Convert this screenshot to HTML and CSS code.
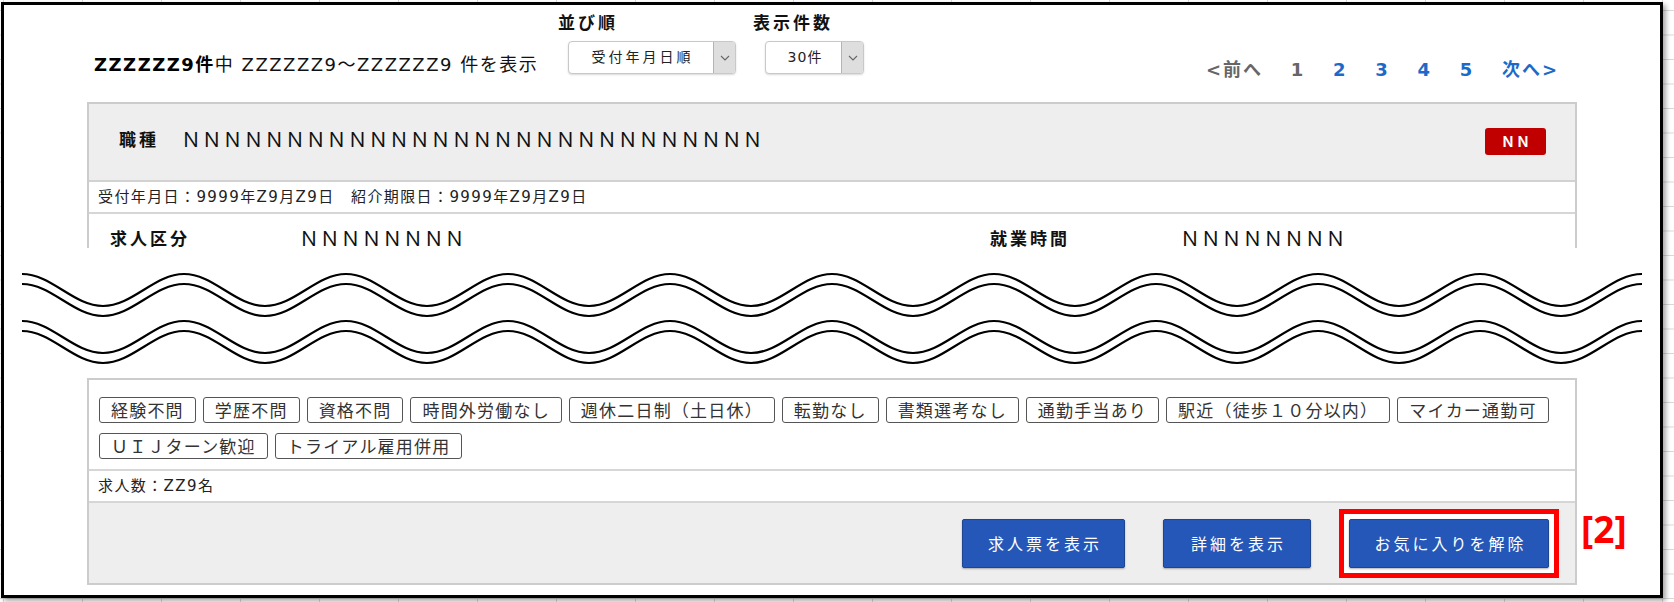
FILE: index.html
```html
<!DOCTYPE html>
<html lang="ja">
<head>
<meta charset="utf-8">
<title>求人一覧</title>
<link rel="stylesheet" href="styles.css">
</head>
<body>
<div class="frame">
  <section class="top">
    <div class="toolbar">
      <p class="count"><b>ZZZZZZ9件</b>中 ZZZZZZ9〜ZZZZZZ9 件を表示</p>
      <div class="field">
        <span class="field-label">並び順</span>
        <div class="select select-sort">
          <span class="select-value">受付年月日順</span>
          <span class="select-btn"><svg width="10" height="6" viewBox="0 0 10 6"><polyline points="1,1 5,5 9,1" fill="none" stroke="#666" stroke-width="1.1"/></svg></span>
        </div>
      </div>
      <div class="field field-size">
        <span class="field-label">表示件数</span>
        <div class="select select-size">
          <span class="select-value">30件</span>
          <span class="select-btn"><svg width="10" height="6" viewBox="0 0 10 6"><polyline points="1,1 5,5 9,1" fill="none" stroke="#666" stroke-width="1.1"/></svg></span>
        </div>
      </div>
      <nav class="pager">
        <span class="pg-off">&lt;前へ</span>
        <span class="pg-off">1</span>
        <a class="pg-link">2</a>
        <a class="pg-link">3</a>
        <a class="pg-link">4</a>
        <a class="pg-link">5</a>
        <a class="pg-link">次へ&gt;</a>
      </nav>
    </div>
    <div class="card card-top">
      <div class="card-head">
        <span class="head-label">職種</span>
        <span class="nn">ＮＮＮＮＮＮＮＮＮＮＮＮＮＮＮＮＮＮＮＮＮＮＮＮＮＮＮＮ</span>
        <span class="badge">ＮＮ</span>
      </div>
      <div class="dates">受付年月日：9999年Z9月Z9日　紹介期限日：9999年Z9月Z9日</div>
      <div class="detail">
        <span class="detail-label">求人区分</span>
        <span class="nn">ＮＮＮＮＮＮＮＮ</span>
        <span class="detail-label">就業時間</span>
        <span class="nn">ＮＮＮＮＮＮＮＮ</span>
      </div>
    </div>
  </section>

  <div class="break">
    <svg class="wave" width="1656" height="130" viewBox="0 0 1656 130">
      <g fill="none" stroke="#000" stroke-width="2.2">
        <path d="M18 26c29.5 0 51.5 32 81 32c29.5 0 51.5 -32 81 -32c29.5 0 51.5 32 81 32c29.5 0 51.5 -32 81 -32c29.5 0 51.5 32 81 32c29.5 0 51.5 -32 81 -32c29.5 0 51.5 32 81 32c29.5 0 51.5 -32 81 -32c29.5 0 51.5 32 81 32c29.5 0 51.5 -32 81 -32c29.5 0 51.5 32 81 32c29.5 0 51.5 -32 81 -32c29.5 0 51.5 32 81 32c29.5 0 51.5 -32 81 -32c29.5 0 51.5 32 81 32c29.5 0 51.5 -32 81 -32c29.5 0 51.5 32 81 32c29.5 0 51.5 -32 81 -32c29.5 0 51.5 32 81 32c29.5 0 51.5 -32 81 -32"/>
        <path d="M18 36c29.5 0 51.5 32 81 32c29.5 0 51.5 -32 81 -32c29.5 0 51.5 32 81 32c29.5 0 51.5 -32 81 -32c29.5 0 51.5 32 81 32c29.5 0 51.5 -32 81 -32c29.5 0 51.5 32 81 32c29.5 0 51.5 -32 81 -32c29.5 0 51.5 32 81 32c29.5 0 51.5 -32 81 -32c29.5 0 51.5 32 81 32c29.5 0 51.5 -32 81 -32c29.5 0 51.5 32 81 32c29.5 0 51.5 -32 81 -32c29.5 0 51.5 32 81 32c29.5 0 51.5 -32 81 -32c29.5 0 51.5 32 81 32c29.5 0 51.5 -32 81 -32c29.5 0 51.5 32 81 32c29.5 0 51.5 -32 81 -32"/>
        <path d="M18 73c29.5 0 51.5 32 81 32c29.5 0 51.5 -32 81 -32c29.5 0 51.5 32 81 32c29.5 0 51.5 -32 81 -32c29.5 0 51.5 32 81 32c29.5 0 51.5 -32 81 -32c29.5 0 51.5 32 81 32c29.5 0 51.5 -32 81 -32c29.5 0 51.5 32 81 32c29.5 0 51.5 -32 81 -32c29.5 0 51.5 32 81 32c29.5 0 51.5 -32 81 -32c29.5 0 51.5 32 81 32c29.5 0 51.5 -32 81 -32c29.5 0 51.5 32 81 32c29.5 0 51.5 -32 81 -32c29.5 0 51.5 32 81 32c29.5 0 51.5 -32 81 -32c29.5 0 51.5 32 81 32c29.5 0 51.5 -32 81 -32"/>
        <path d="M18 83c29.5 0 51.5 32 81 32c29.5 0 51.5 -32 81 -32c29.5 0 51.5 32 81 32c29.5 0 51.5 -32 81 -32c29.5 0 51.5 32 81 32c29.5 0 51.5 -32 81 -32c29.5 0 51.5 32 81 32c29.5 0 51.5 -32 81 -32c29.5 0 51.5 32 81 32c29.5 0 51.5 -32 81 -32c29.5 0 51.5 32 81 32c29.5 0 51.5 -32 81 -32c29.5 0 51.5 32 81 32c29.5 0 51.5 -32 81 -32c29.5 0 51.5 32 81 32c29.5 0 51.5 -32 81 -32c29.5 0 51.5 32 81 32c29.5 0 51.5 -32 81 -32c29.5 0 51.5 32 81 32c29.5 0 51.5 -32 81 -32"/>
      </g>
    </svg>
  </div>

  <section class="bottom">
    <div class="card card-bottom">
      <div class="tags">
        <span class="tag">経験不問</span>
        <span class="tag">学歴不問</span>
        <span class="tag">資格不問</span>
        <span class="tag">時間外労働なし</span>
        <span class="tag">週休二日制（土日休）</span>
        <span class="tag">転勤なし</span>
        <span class="tag">書類選考なし</span>
        <span class="tag">通勤手当あり</span>
        <span class="tag">駅近（徒歩１０分以内）</span>
        <span class="tag">マイカー通勤可</span>
        <span class="tag">ＵＩＪターン歓迎</span>
        <span class="tag">トライアル雇用併用</span>
      </div>
      <div class="openings">求人数：ZZ9名</div>
      <div class="actions">
        <button class="btn btn-sheet">求人票を表示</button>
        <button class="btn btn-detail">詳細を表示</button>
        <div class="highlight"><button class="btn btn-fav">お気に入りを解除</button></div>
      </div>
    </div>
    <span class="annot">[2]</span>
  </section>
</div>
</body>
</html>
```

FILE: styles.css
```css
html, body {
  margin: 0;
  padding: 0;
  width: 1674px;
  height: 602px;
  overflow: hidden;
}

body {
  background-color: #fff;
  background-image:
    linear-gradient(to right, #d9d9d9 1px, transparent 1px),
    linear-gradient(to bottom, #d9d9d9 1px, transparent 1px);
  background-size: 79px 100%, 100% 24.5px;
  background-position: 3px 0, 0 10px;
  font-family: "Noto Sans CJK JP", sans-serif;
  color: #222;
}

.frame {
  box-sizing: border-box;
  margin: 2px 0 0 1px;
  width: 1662px;
  height: 596px;
  border: 3px solid #000;
  background: #fff;
  box-shadow: 3px 3px 5px rgba(0, 0, 0, 0.35);
}

/* ---------- top part ---------- */
.top {
  height: 243px;
  overflow: hidden;
}

.toolbar {
  display: flex;
  align-items: flex-start;
  height: 97px;
  padding: 0 101px 0 90px;
}

.count {
  flex: 0 0 464px;
  margin: 48px 0 0;
  font-family: "DejaVu Sans", "Noto Sans CJK JP", sans-serif;
  font-size: 18px;
  line-height: 24px;
  letter-spacing: 1.5px;
  color: #111;
  white-space: nowrap;
}

.count b {
  font-weight: 700;
  color: #000;
}

.field {
  display: flex;
  flex-direction: column;
  align-items: flex-start;
  margin-top: 7px;
}

.field-size {
  margin-left: 17px;
}

.field-label {
  font-size: 17px;
  font-weight: 700;
  line-height: 20px;
  letter-spacing: 3px;
  color: #111;
}

.select {
  box-sizing: border-box;
  display: flex;
  height: 33px;
  margin: 9px 0 0 10px;
  border: 1px solid #c8c8c8;
  border-radius: 4px;
  background: #fff;
  box-shadow: 0 1px 2px rgba(0, 0, 0, 0.15);
  overflow: hidden;
}

.select-sort {
  width: 168px;
}

.select-size {
  width: 99px;
  margin-left: 12px;
}

.select-value {
  flex: 1;
  text-align: center;
  font-family: "DejaVu Sans", "Noto Sans CJK JP", sans-serif;
  font-size: 14px;
  line-height: 31px;
  letter-spacing: 3px;
  text-indent: 3px;
  color: #222;
}

.select-size .select-value {
  letter-spacing: 1px;
}

.select-btn {
  display: flex;
  align-items: center;
  justify-content: center;
  width: 21px;
  background: #dedede;
  border-left: 1px solid #b4b4b4;
}

.pager {
  display: flex;
  gap: 27.7px;
  margin: 53px 0 0 auto;
  font-family: "DejaVu Sans", "Noto Sans CJK JP", sans-serif;
  font-size: 18px;
  font-weight: 700;
  line-height: 24px;
  letter-spacing: 2px;
  white-space: nowrap;
}

.pg-off {
  color: #666;
}

.pg-link {
  color: #1b6ac9;
}

.card {
  box-sizing: border-box;
  width: 1490px;
  margin-left: 83px;
  border: 2px solid #cccccc;
  background: #fff;
}

.card-head {
  box-sizing: border-box;
  display: flex;
  align-items: center;
  height: 78px;
  padding: 0 29px 8px 30px;
  background: #eeeeee;
  border-bottom: 2px solid #d2d2d2;
}

.head-label,
.detail-label {
  font-size: 17px;
  font-weight: 700;
  letter-spacing: 3px;
  color: #111;
}

.head-label {
  margin-right: 22px;
}

.nn {
  font-size: 20px;
  letter-spacing: 0.8px;
  color: #111;
  white-space: nowrap;
}

.badge {
  margin: 7px 0 0 auto;
  width: 61px;
  height: 27px;
  border-radius: 3px;
  background: #c00000;
  color: #fff;
  font-size: 14px;
  font-weight: 700;
  line-height: 27px;
  letter-spacing: 1px;
  text-indent: 1px;
  text-align: center;
}

.dates {
  height: 30px;
  padding-left: 9px;
  border-bottom: 2px solid #d6d6d6;
  font-family: "DejaVu Sans", "Noto Sans CJK JP", sans-serif;
  font-size: 15px;
  line-height: 30px;
  letter-spacing: 1.4px;
  color: #222;
}

.detail {
  display: grid;
  grid-template-columns: 189px 691px 190px 1fr;
  align-items: center;
  height: 47px;
  padding-left: 21px;
}

/* ---------- break ---------- */
.break {
  height: 130px;
}

.wave {
  display: block;
}

/* ---------- bottom part ---------- */
.bottom {
  display: flex;
  align-items: flex-start;
}

.tags {
  display: flex;
  flex-wrap: wrap;
  gap: 10px 7px;
  padding: 17px 10px 10px;
}

.tag {
  box-sizing: border-box;
  height: 26px;
  padding: 0 11px;
  border: 1px solid #555;
  border-radius: 3px;
  font-size: 17px;
  line-height: 24px;
  letter-spacing: 1.2px;
  color: #333;
  white-space: nowrap;
}

.openings {
  height: 30px;
  padding-left: 9px;
  border-top: 2px solid #d6d6d6;
  font-family: "DejaVu Sans", "Noto Sans CJK JP", sans-serif;
  font-size: 15px;
  line-height: 30px;
  letter-spacing: 1.4px;
  color: #222;
}

.actions {
  display: flex;
  justify-content: flex-end;
  align-items: center;
  gap: 38px;
  height: 80px;
  padding-right: 26px;
  border-top: 2px solid #d6d6d6;
  background: #eeeeee;
}

.btn {
  box-sizing: border-box;
  height: 49px;
  padding: 0;
  border: 1px solid #1d4590;
  border-radius: 2px;
  background: #2557b9;
  box-shadow: 0 1px 2px rgba(0, 0, 0, 0.3);
  color: #fff;
  font-family: "Noto Sans CJK JP", sans-serif;
  font-size: 16px;
  letter-spacing: 3px;
  text-indent: 3px;
  text-align: center;
}

.btn-sheet {
  width: 163px;
}

.btn-detail {
  width: 148px;
}

.btn-fav {
  width: 200px;
  display: block;
}

.highlight {
  margin: -10px;
  padding: 5px;
  border: 5px solid #ff0000;
  background: #fff;
}

.annot {
  margin: 129px 0 0 4px;
  font-family: "Noto Sans", sans-serif;
  font-size: 37px;
  font-weight: 700;
  line-height: 44px;
  letter-spacing: 0;
  color: #ff0000;
}
```
